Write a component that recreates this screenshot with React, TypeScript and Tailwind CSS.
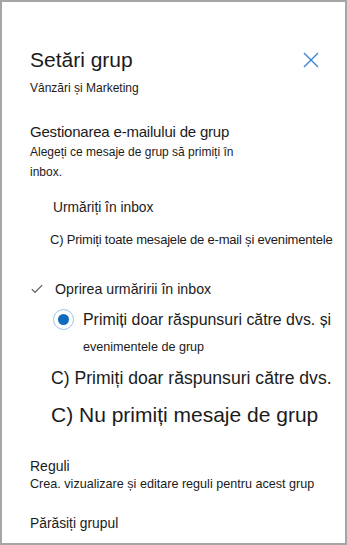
import React from "react";

const F = { fontFamily: '"Liberation Sans", Arial, sans-serif' };

export default function App() {
  return (
    <div
      className="w-[347px] h-[545px] bg-white border-2 border-[#a6a6a6] text-[#1b1b1b] pt-[46px] pl-[28px] pr-[8px] overflow-hidden"
      style={F}
    >
      <div className="flex items-start justify-between">
        <div className="text-[21px] leading-[24px]">Setări grup</div>
        <svg width="16" height="16" viewBox="0 0 16 16" className="mt-[4px] mr-[18px]">
          <path d="M1 1 L15 15 M15 1 L1 15" stroke="#3a83d6" strokeWidth="1.4" fill="none" />
        </svg>
      </div>
      <div className="mt-[6px] text-[12px] leading-[20px]">Vânzări și Marketing</div>

      <div className="mt-[24px] text-[15px] leading-[20px] tracking-[-0.2px]">Gestionarea e-mailului de grup</div>
      <div className="text-[12px] leading-[20px] w-[230px]">Alegeți ce mesaje de grup să primiți în inbox.</div>

      <div className="mt-[16px] ml-[23px] text-[13.8px] leading-[20px]">Urmăriți în inbox</div>
      <div className="mt-[12px] ml-[20px] text-[13px] leading-[20px] tracking-[-0.2px] whitespace-nowrap">
        C) Primiți toate mesajele de e-mail și evenimentele
      </div>

      <div className="mt-[29px] flex items-center text-[14.2px] leading-[20px]">
        <svg width="12" height="10" viewBox="0 0 12 10" className="ml-[1px] mr-[12px]">
          <path d="M0.8 5.2 L4 8.4 L11.2 1.2" stroke="#555" strokeWidth="1.1" fill="none" />
        </svg>
        <span>Oprirea urmăririi în inbox</span>
      </div>

      <div className="mt-[10px] ml-[23px] flex items-center">
        <div className="w-[21px] h-[21px] rounded-full border-[1.5px] border-[#9cc3ea] flex items-center justify-center shrink-0">
          <div className="w-[11px] h-[11px] rounded-full bg-[#0f6cbd]" />
        </div>
        <div className="ml-[9px] text-[15.9px] leading-[20px] whitespace-nowrap">Primiți doar răspunsuri către dvs. și</div>
      </div>
      <div className="mt-[7px] ml-[53px] text-[12.6px] leading-[20px]">evenimentele de grup</div>

      <div className="mt-[11px] ml-[21px] text-[17.6px] leading-[20px] whitespace-nowrap">C) Primiți doar răspunsuri către dvs.</div>
      <div className="mt-[15px] ml-[21px] text-[21px] leading-[24px] whitespace-nowrap">C) Nu primiți mesaje de grup</div>

      <div className="mt-[30px] text-[14px] leading-[18px]">Reguli</div>
      <div className="text-[12.6px] leading-[18px] whitespace-nowrap">Crea. vizualizare și editare reguli pentru acest grup</div>

      <div className="mt-[22px] text-[13.8px] leading-[18px]">Părăsiți grupul</div>
    </div>
  );
}
